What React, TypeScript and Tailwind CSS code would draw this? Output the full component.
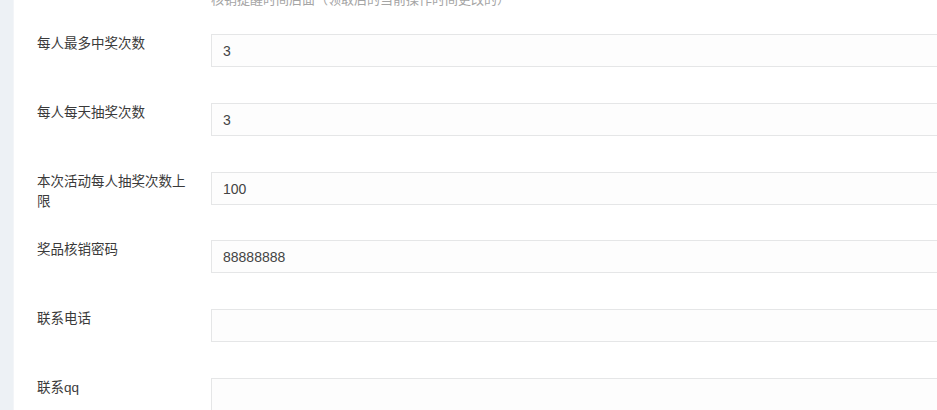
const rows = [
  { label: '每人最多中奖次数', value: '3', h: 'h-[69px]' },
  { label: '每人每天抽奖次数', value: '3', h: 'h-[69px]' },
  { label: '本次活动每人抽奖次数上限', value: '100', h: 'h-[68px]' },
  { label: '奖品核销密码', value: '88888888', h: 'h-[69px]' },
  { label: '联系电话', value: '', h: 'h-[69px]' },
  { label: '联系qq', value: '', h: 'h-[69px]' },
];

export default function App() {
  return (
    <div
      className="flex h-[410px] w-[937px] overflow-hidden bg-white text-[#3a3a3a]"
      style={{ fontFamily: '"Liberation Sans", "Noto Sans CJK SC", sans-serif' }}
    >
      {/* left gutter */}
      <div className="w-[14px] shrink-0 border-r border-[#f3f5f8] bg-[#edf1f5]" />

      <div className="flex-1 pl-[23px]">
        {/* help text of the previous field, scrolled mostly out of view */}
        <div className="-mt-[10px] flex h-[44px]">
          <div className="w-[174px] shrink-0" />
          <p className="whitespace-nowrap text-[13px] leading-[20px] text-[#a5a5a5]">
            核销提醒时间后面（领取后的当前操作时间更改的）
          </p>
        </div>

        {rows.map((row) => (
          <div key={row.label} className={`flex items-start ${row.h}`}>
            <div className="w-[174px] shrink-0">
              <div className="w-[155px] text-[13.5px] leading-[20px]">{row.label}</div>
            </div>
            <input
              readOnly
              value={row.value}
              className="h-[33px] w-[760px] shrink-0 border border-[#e5e6e7] bg-[#fdfdfd] px-[11px] text-[14px] text-[#444] outline-none"
            />
          </div>
        ))}
      </div>
    </div>
  );
}
